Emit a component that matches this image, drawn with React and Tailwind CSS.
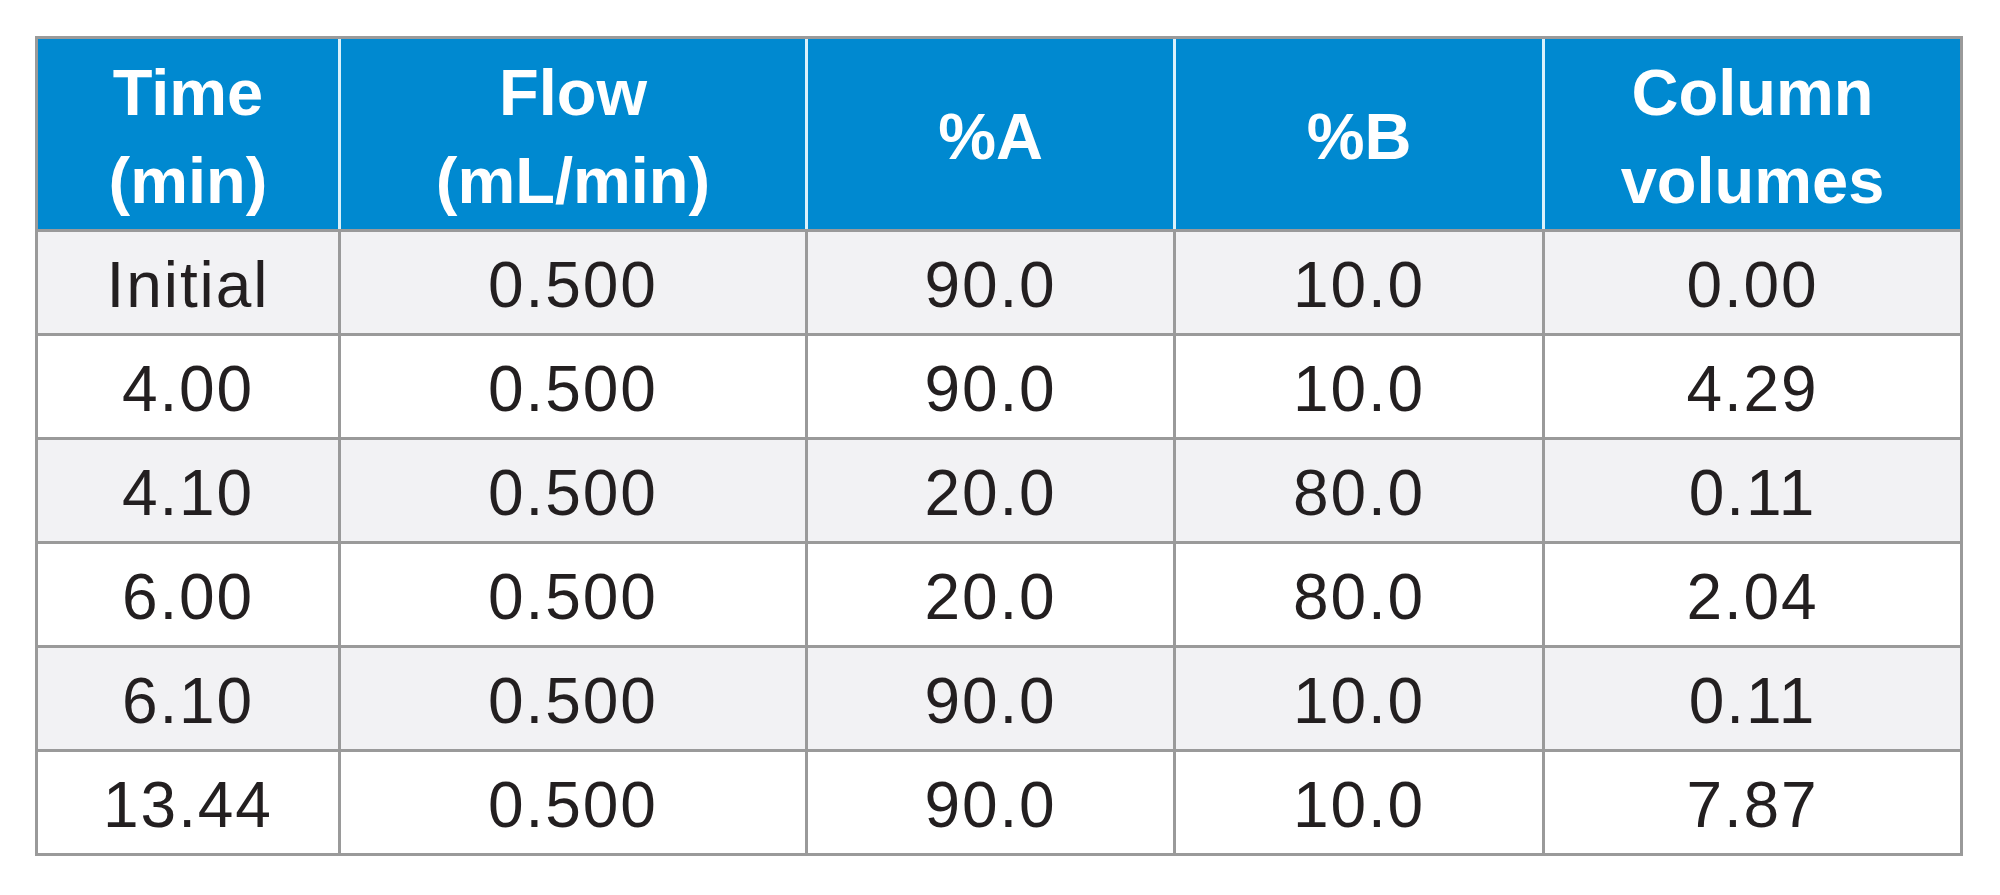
const columns = [
  { key: 'time', label: ['Time', '(min)'], width: 'w-[303px]' },
  { key: 'flow', label: ['Flow', '(mL/min)'], width: 'w-[467px]' },
  { key: 'a', label: ['%A'], width: 'w-[368px]' },
  { key: 'b', label: ['%B'], width: 'w-[369px]' },
  { key: 'cv', label: ['Column', 'volumes'], width: 'w-[415px]' },
];

const rows = [
  ['Initial', '0.500', '90.0', '10.0', '0.00'],
  ['4.00', '0.500', '90.0', '10.0', '4.29'],
  ['4.10', '0.500', '20.0', '80.0', '0.11'],
  ['6.00', '0.500', '20.0', '80.0', '2.04'],
  ['6.10', '0.500', '90.0', '10.0', '0.11'],
  ['13.44', '0.500', '90.0', '10.0', '7.87'],
];

export default function App() {
  return (
    <div className="w-[2000px] h-[895px] bg-white pt-[36px] pl-[35px] font-['Liberation_Sans',Arial,sans-serif]">
      <div className="w-[1928px] border-[3px] border-[#9a9a9a] flex flex-col">
        {/* header */}
        <div className="flex h-[190px] bg-[#0089d0]">
          {columns.map((col, i) => (
            <div
              key={col.key}
              className={`${col.width} shrink-0 flex flex-col items-center justify-center pt-[5px] text-white font-bold text-[65px] leading-[88px] ${i < columns.length - 1 ? 'border-r-[3px] border-[#d9f1fb]' : ''}`}
            >
              {col.label.map((line) => (
                <span key={line}>{line}</span>
              ))}
            </div>
          ))}
        </div>

        {rows.map((row, r) => (
          <div
            key={r}
            className={`flex h-[104px] border-t-[3px] border-[#9a9a9a] ${r % 2 === 0 ? 'bg-[#f2f2f4]' : 'bg-white'}`}
          >
            {row.map((cell, i) => (
              <div
                key={i}
                className={`${columns[i].width} shrink-0 flex items-center justify-center pt-[4px] text-[#231f20] text-[64px] tracking-[0.03em] ${i < row.length - 1 ? 'border-r-[3px] border-[#9a9a9a]' : ''}`}
              >
                {cell}
              </div>
            ))}
          </div>
        ))}
      </div>
    </div>
  );
}
